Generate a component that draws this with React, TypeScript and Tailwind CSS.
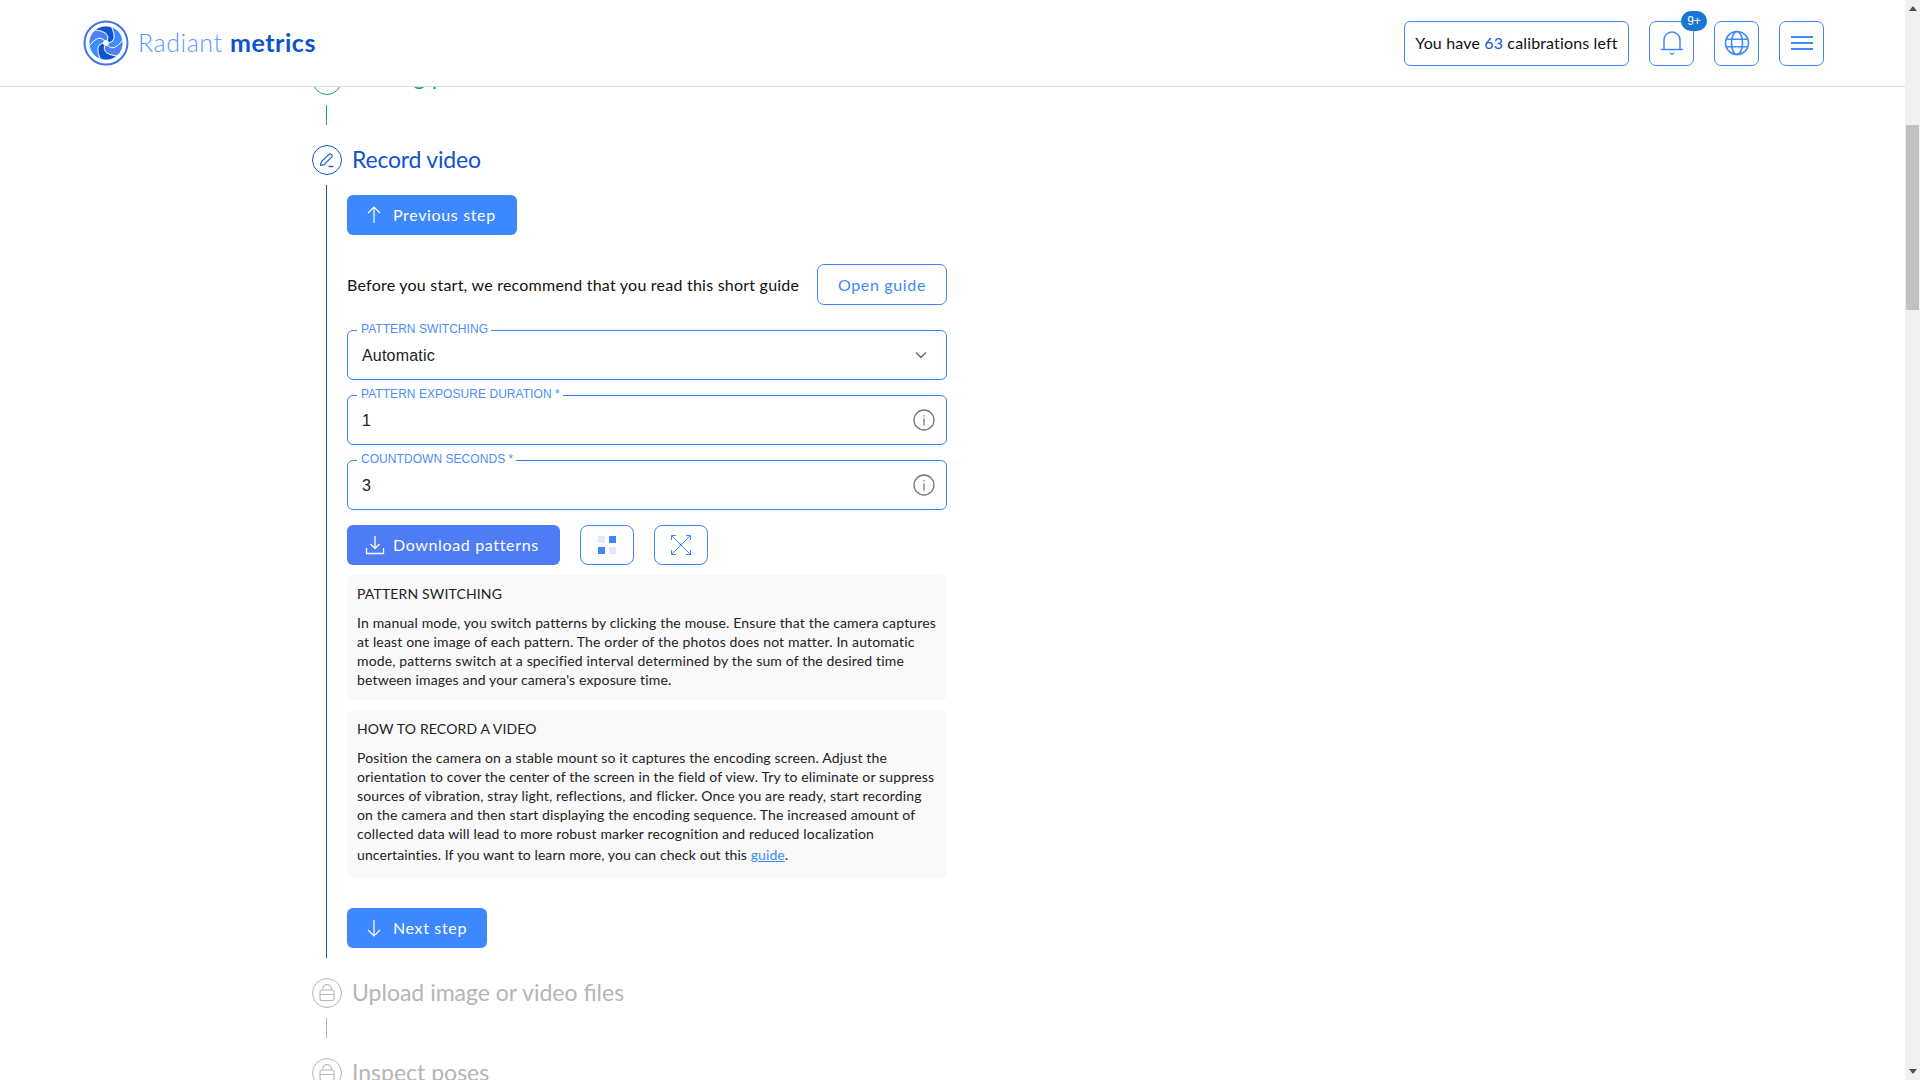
import React from "react";

const body = "font-['Lato','Noto_Sans',sans-serif]";

function Logo() {
  const blades = [
    ["#0d55cf", -60],
    ["#3d8bff", 0],
    ["#4f7ff5", 60],
    ["#0d55cf", 120],
    ["#3d8bff", 180],
    ["#4f7ff5", 240],
  ] as const;
  return (
    <svg width="46" height="46" viewBox="-23 -23 46 46" className="shrink-0">
      <circle r="21.5" fill="none" stroke="#3f74e6" strokeWidth="2" />
      {blades.map(([c, r], i) => (
        <path
          key={i}
          transform={`rotate(${r})`}
          fill={c}
          stroke="#fff"
          strokeWidth="0.7"
          d="M3 0Q12-2 5.8-16A17 17 0 0 1 16.7-2.95Q7.73 9.39 1.5 2.6Z"
        />
      ))}
      <circle r="2.4" fill="#fff" />
    </svg>
  );
}

function IconBox({ children, className = "" }: { children: React.ReactNode; className?: string }) {
  return (
    <div className={`flex h-[45px] w-[45px] items-center justify-center rounded-[7px] border border-[#3f88fb] ${className}`}>
      {children}
    </div>
  );
}

function Field({ label, value, icon }: { label: string; value: string; icon: React.ReactNode }) {
  return (
    <div className="relative flex h-[50px] w-[600px] items-center justify-between rounded-[6px] border border-[#3f80ee] pl-[14px] pr-[11px] font-['Liberation_Sans',sans-serif] text-[16px] tracking-[0.2px] text-[#222]">
      <span className="absolute left-[9px] top-[-8px] bg-white pl-[4px] pr-[3px] text-[12px] leading-[13px] tracking-[0.05px] text-[#4c8df8]">{label}</span>
      <span className="pt-[1px]">{value}</span>
      {icon}
    </div>
  );
}

function Info() {
  return (
    <svg width="22" height="22" viewBox="0 0 22 22" fill="none" stroke="#777" strokeWidth="1.3" strokeLinecap="round">
      <circle cx="11" cy="11" r="10" />
      <path d="M11 10v6M11 6.6v.4" />
    </svg>
  );
}

function Chevron() {
  return (
    <svg width="14" height="14" viewBox="0 0 14 14" fill="none" stroke="#666" strokeWidth="1.3" className="mr-[7px]">
      <path d="M2 4.5l5 5 5-5" />
    </svg>
  );
}

function Lock({ color = "#b5b5b5" }: { color?: string }) {
  return (
    <svg width="18" height="18" viewBox="0 0 18 18" fill="none" stroke={color} strokeWidth="1.1">
      <rect x="2" y="6" width="14" height="10.5" rx="2" />
      <path d="M4.6 6V5a4.4 4.4 0 0 1 8.8 0v1M2 10.5h14" />
    </svg>
  );
}

function Step({ title, color, icon, textClass = "pb-[2px]" }: { title: string; color: string; icon?: React.ReactNode; textClass?: string }) {
  return (
    <div className="flex h-[30px] items-center">
      <div className="flex h-[30px] w-[30px] items-center justify-center rounded-full border" style={{ borderColor: color }}>
        {icon}
      </div>
      <div className={`ml-[10px] whitespace-nowrap text-[23px] leading-[30px] ${body} ${textClass}`} style={{ color }}>{title}</div>
    </div>
  );
}

function Connector({ color }: { color: string }) {
  return <div className="mb-[20px] ml-[14px] mt-[10px] h-[20px] w-px" style={{ backgroundColor: color }} />;
}

function PrimaryButton({ children, className = "" }: { children: React.ReactNode; className?: string }) {
  return (
    <div className={`flex h-[40px] items-center rounded-[6px] pl-[19px] text-[16px] tracking-[0.65px] text-white ${body} ${className}`}>
      {children}
    </div>
  );
}

function Note({ title, children, className = "" }: { title: string; children: React.ReactNode; className?: string }) {
  return (
    <div className={`w-[600px] rounded-[6px] bg-[#f9f9f9] px-[10px] pt-[9px] text-[14px] leading-[19px] tracking-[0.15px] text-[#222] ${className}`}>
      <div className="mb-[10px]">{title}</div>
      <div className="whitespace-nowrap">{children}</div>
    </div>
  );
}

export default function App() {
  return (
    <div className={`flex h-[1080px] w-[1920px] overflow-hidden bg-white ${body}`}>
      <div className="flex h-full w-[1905px] flex-col">
        <header className="relative z-10 flex h-[87px] shrink-0 items-center justify-between border-b border-[#ddd] bg-white pl-[83px] pr-[81px]">
          <div className="flex items-center">
            <Logo />
            <div className="ml-[9px] whitespace-nowrap text-[25px] tracking-[0.55px] text-[#5a9bff]">
              <span className="font-light">Radiant </span>
              <span className="font-bold text-[#0d52cf]">metrics</span>
            </div>
          </div>
          <div className="flex items-center">
            <div className="flex h-[45px] w-[225px] items-center justify-center whitespace-nowrap rounded-[6px] border border-[#3f88fb] text-[16px] tracking-[0.15px] text-[#111]">
              <span>You have <span className="text-[#1459d8]">63</span> calibrations left</span>
            </div>
            <IconBox className="relative ml-[20px]">
              <svg width="24" height="26" viewBox="0 0 24 26" fill="none" stroke="#3f88fb" strokeWidth="1.5" strokeLinecap="round">
                <path d="M4 19V10a8 8 0 0 1 16 0v9M1.5 19.5h21M10.5 23.5c1 .8 2 .8 3 0" />
              </svg>
              <span className="absolute right-[-14px] top-[-11px] flex h-[20px] w-[26px] items-center justify-center rounded-full bg-[#1976d2] font-['Liberation_Sans',sans-serif] text-[12px] text-white">9+</span>
            </IconBox>
            <IconBox className="ml-[20px]">
              <svg width="26" height="26" viewBox="0 0 26 26" fill="none" stroke="#3f88fb" strokeWidth="1.6">
                <circle cx="13" cy="13" r="11.5" />
                <ellipse cx="13" cy="13" rx="5.5" ry="11.5" />
                <path d="M2 9.3h22M2 16.7h22" />
              </svg>
            </IconBox>
            <IconBox className="ml-[20px]">
              <svg width="22" height="16" viewBox="0 0 22 16" fill="none" stroke="#3f88fb" strokeWidth="2">
                <path d="M0 2h22M0 8h22M0 14h22" />
              </svg>
            </IconBox>
          </div>
        </header>

        <main className="flex-1 overflow-hidden pl-[312px]">
          <div className="mt-[-22px]">
            <Step title="Testing patterns" color="#17a865" textClass="pb-[8px] tracking-[0.3px]" />
            <Connector color="#17a865" />
            <Step
              title="Record video"
              color="#1052d2"
              textClass="pb-[2px] tracking-[-0.2px]"
              icon={
                <svg width="18" height="18" viewBox="0 0 18 18" fill="none" stroke="#1c5fd8" strokeWidth="1.2">
                  <path d="M2.5 14.5l.8-3.6 7.6-7.6a1.6 1.6 0 0 1 2.3 0l.5.5a1.6 1.6 0 0 1 0 2.3l-7.6 7.6z" />
                  <path d="M10.5 15.5h5" strokeWidth="1.4" />
                </svg>
              }
            />
            <div className="mb-[20px] ml-[14px] mt-[10px] flex h-[773px] flex-col border-l border-[#1052d2] pl-[20px] pt-[10px]">
              <PrimaryButton className="w-[170px] bg-[#3d87ff]">
                <svg width="14" height="18" viewBox="0 0 14 18" fill="none" stroke="#fff" strokeWidth="1.2" className="ml-[1px] mr-[12px]">
                  <path d="M7 17V1M1 7l6-6 6 6" />
                </svg>
                Previous step
              </PrimaryButton>
              <div className="mt-[29px] flex h-[41px] w-[600px] items-center justify-between">
                <span className="whitespace-nowrap text-[16px] tracking-[0.23px] text-[#111]">Before you start, we recommend that you read this short guide</span>
                <div className="flex h-[41px] w-[130px] items-center justify-center rounded-[7px] border border-[#3f88fb] text-[16px] tracking-[0.65px] text-[#3f88fb]">Open guide</div>
              </div>
              <div className="mt-[25px] flex flex-col gap-[15px]">
                <Field label="PATTERN SWITCHING" value="Automatic" icon={<Chevron />} />
                <Field label="PATTERN EXPOSURE DURATION *" value="1" icon={<Info />} />
                <Field label="COUNTDOWN SECONDS *" value="3" icon={<Info />} />
              </div>
              <div className="mt-[15px] flex h-[40px] items-center">
                <PrimaryButton className="w-[213px] bg-[#4d7cf5]">
                  <svg width="20" height="20" viewBox="0 0 20 20" fill="none" stroke="#fff" strokeWidth="1.3" className="ml-[-1px] mr-[8px]">
                    <path d="M10 1v12M5.5 9l4.5 4.5L14.5 9M1.5 13v5.5h17V13" />
                  </svg>
                  Download patterns
                </PrimaryButton>
                <div className="ml-[20px] flex h-[40px] w-[54px] items-center justify-center rounded-[8px] border border-[#3f88fb]">
                  <div className="grid grid-cols-2 gap-[4px]">
                    <div className="h-[7px] w-[7px] bg-[#dfeafd]" />
                    <div className="h-[7px] w-[7px] bg-[#3d87ff]" />
                    <div className="h-[7px] w-[7px] bg-[#3d87ff]" />
                    <div className="h-[7px] w-[7px] bg-[#dfeafd]" />
                  </div>
                </div>
                <div className="ml-[20px] flex h-[40px] w-[54px] items-center justify-center rounded-[8px] border border-[#3f88fb]">
                  <svg width="20" height="20" viewBox="0 0 20 20" fill="none" stroke="#3f88fb" strokeWidth="1">
                    <path d="M0.5 5V.5H5M15 .5h4.5V5M19.5 15v4.5H15M5 19.5H.5V15M.5 .5l19 19M19.5 .5l-19 19" />
                  </svg>
                </div>
              </div>
              <Note title="PATTERN SWITCHING" className="mt-[10px] h-[125px]">
                In manual mode, you switch patterns by clicking the mouse. Ensure that the camera captures<br />
                at least one image of each pattern. The order of the photos does not matter. In automatic<br />
                mode, patterns switch at a specified interval determined by the sum of the desired time<br />
                between images and your camera's exposure time.
              </Note>
              <Note title="HOW TO RECORD A VIDEO" className="mt-[10px] h-[168px]">
                Position the camera on a stable mount so it captures the encoding screen. Adjust the<br />
                orientation to cover the center of the screen in the field of view. Try to eliminate or suppress<br />
                sources of vibration, stray light, reflections, and flicker. Once you are ready, start recording<br />
                on the camera and then start displaying the encoding sequence. The increased amount of<br />
                collected data will lead to more robust marker recognition and reduced localization<br />
                <span className="mt-[2px] inline-block tracking-[0.09px]">uncertainties. If you want to learn more, you can check out this <span className="text-[#3f88fb] underline">guide</span>.</span>
              </Note>
              <PrimaryButton className="mt-[30px] w-[140px] bg-[#3d87ff]">
                <svg width="14" height="18" viewBox="0 0 14 18" fill="none" stroke="#fff" strokeWidth="1.2" className="ml-[1px] mr-[12px]">
                  <path d="M7 1v16M1 11l6 6 6-6" />
                </svg>
                Next step
              </PrimaryButton>
            </div>
            <Step title="Upload image or video files" color="#b5b5b5" icon={<Lock />} />
            <Connector color="#b5b5b5" />
            <Step title="Inspect poses" color="#b5b5b5" icon={<Lock />} />
          </div>
        </main>
      </div>

      <aside className="flex h-full w-[15px] shrink-0 flex-col bg-[#f1f1f1]">
        <div className="flex h-[17px] items-center justify-center">
          <div className="h-0 w-0 border-x-[4px] border-b-[5px] border-x-transparent border-b-[#505050]" />
        </div>
        <div className="mx-[1px] mt-[108px] h-[185px] bg-[#c1c1c1]" />
        <div className="flex-1" />
        <div className="flex h-[17px] items-center justify-center">
          <div className="h-0 w-0 border-x-[4px] border-t-[5px] border-x-transparent border-t-[#505050]" />
        </div>
      </aside>
    </div>
  );
}
